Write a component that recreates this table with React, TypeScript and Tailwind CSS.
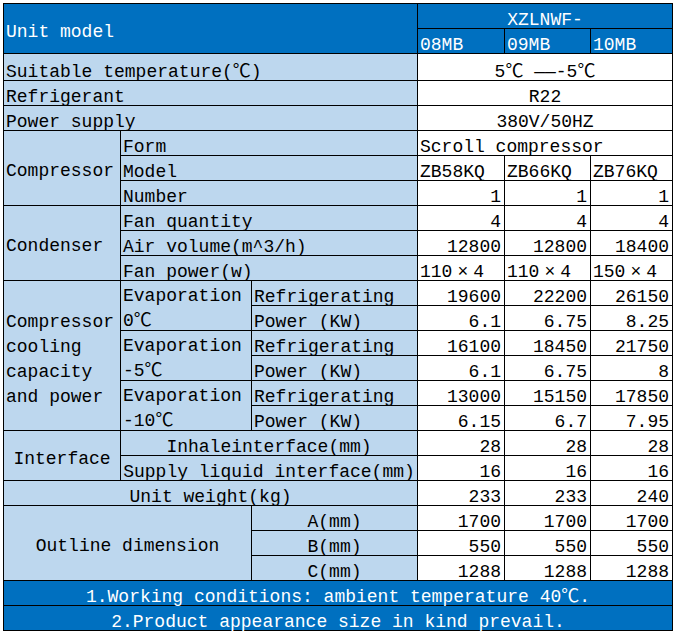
import React from "react";

type P = { c: string; children?: React.ReactNode };
const Cell = ({ c, children }: P) => (
  <div className={`flex whitespace-nowrap overflow-visible ${c}`}>{children}</div>
);

const D = "bg-[#0070c0] text-white";
const L = "bg-[#bdd7ee] text-black";
const W = "bg-white text-black";
const BL = "items-end justify-start pl-[2px] leading-[16px]";
const BR = "items-end justify-end pr-[3px] leading-[16px]";
const BC = "items-end justify-center leading-[16px]";
const ML = "items-center justify-start pl-[2px] pt-[6px] leading-[20px]";
const MC = "items-center justify-center pt-[6px] leading-[20px]";

const X = () => <span className="mx-[5px]">×</span>;

export default function App() {
  return (
    <div className="w-[674px] h-[633px] bg-white">
      <div
        className="ml-[3px] mt-[3px] inline-grid bg-black p-px gap-px grid-cols-[116px_130px_165px_86px_85px_81px] grid-rows-[24px_24px_26px_repeat(22,24px)] text-[18px] font-['Liberation_Mono','Noto_Sans_CJK_SC',monospace]"
      >
        {/* header */}
        <Cell c={`${D} ${ML} col-start-1 col-span-3 row-start-1 row-span-2`}>Unit model</Cell>
        <Cell c={`${D} ${BC} col-start-4 col-span-3 row-start-1`}>XZLNWF-</Cell>
        <Cell c={`${D} ${BL} col-start-4 row-start-2`}>08MB</Cell>
        <Cell c={`${D} ${BL} col-start-5 row-start-2`}>09MB</Cell>
        <Cell c={`${D} ${BL} col-start-6 row-start-2`}>10MB</Cell>

        <Cell c={`${L} ${BL} col-start-1 col-span-3 row-start-3`}>Suitable temperature(℃)</Cell>
        <Cell c={`${W} ${BC} col-start-4 col-span-3 row-start-3`}>
          <span className="whitespace-pre">5℃ ——-5℃</span>
        </Cell>
        <Cell c={`${L} ${BL} col-start-1 col-span-3 row-start-4`}>Refrigerant</Cell>
        <Cell c={`${W} ${BC} col-start-4 col-span-3 row-start-4`}>R22</Cell>
        <Cell c={`${L} ${BL} col-start-1 col-span-3 row-start-5`}>Power supply</Cell>
        <Cell c={`${W} ${BC} col-start-4 col-span-3 row-start-5`}>380V/50HZ</Cell>

        {/* compressor */}
        <Cell c={`${L} ${ML} col-start-1 row-start-6 row-span-3`}>Compressor</Cell>
        <Cell c={`${L} ${BL} col-start-2 col-span-2 row-start-6`}>Form</Cell>
        <Cell c={`${W} ${BL} col-start-4 col-span-3 row-start-6`}>Scroll compressor</Cell>
        <Cell c={`${L} ${BL} col-start-2 col-span-2 row-start-7`}>Model</Cell>
        <Cell c={`${W} ${BL} col-start-4 row-start-7`}>ZB58KQ</Cell>
        <Cell c={`${W} ${BL} col-start-5 row-start-7`}>ZB66KQ</Cell>
        <Cell c={`${W} ${BL} col-start-6 row-start-7`}>ZB76KQ</Cell>
        <Cell c={`${L} ${BL} col-start-2 col-span-2 row-start-8`}>Number</Cell>
        <Cell c={`${W} ${BR} col-start-4 row-start-8`}>1</Cell>
        <Cell c={`${W} ${BR} col-start-5 row-start-8`}>1</Cell>
        <Cell c={`${W} ${BR} col-start-6 row-start-8`}>1</Cell>

        {/* condenser */}
        <Cell c={`${L} ${ML} col-start-1 row-start-9 row-span-3`}>Condenser</Cell>
        <Cell c={`${L} ${BL} col-start-2 col-span-2 row-start-9`}>Fan quantity</Cell>
        <Cell c={`${W} ${BR} col-start-4 row-start-9`}>4</Cell>
        <Cell c={`${W} ${BR} col-start-5 row-start-9`}>4</Cell>
        <Cell c={`${W} ${BR} col-start-6 row-start-9`}>4</Cell>
        <Cell c={`${L} ${BL} col-start-2 col-span-2 row-start-10`}>Air volume(m^3/h)</Cell>
        <Cell c={`${W} ${BR} col-start-4 row-start-10`}>12800</Cell>
        <Cell c={`${W} ${BR} col-start-5 row-start-10`}>12800</Cell>
        <Cell c={`${W} ${BR} col-start-6 row-start-10`}>18400</Cell>
        <Cell c={`${L} ${BL} col-start-2 col-span-2 row-start-11`}>Fan power(w)</Cell>
        <Cell c={`${W} ${BL} col-start-4 row-start-11`}>110<X />4</Cell>
        <Cell c={`${W} ${BL} col-start-5 row-start-11`}>110<X />4</Cell>
        <Cell c={`${W} ${BL} col-start-6 row-start-11`}>150<X />4</Cell>

        {/* cooling capacity */}
        <div className={`${L} col-start-1 row-start-12 row-span-6 flex flex-col justify-center pl-[2px] pt-[8px] leading-[25px] whitespace-nowrap`}>
          <span>Compressor</span>
          <span>cooling</span>
          <span>capacity</span>
          <span>and power</span>
        </div>

        <div className={`${L} col-start-2 row-start-12 row-span-2 flex flex-col pl-[2px] pt-[3px] leading-[25px] whitespace-nowrap`}>
          <span>Evaporation</span>
          <span>0℃</span>
        </div>
        <Cell c={`${L} ${BL} col-start-3 row-start-12`}>Refrigerating</Cell>
        <Cell c={`${W} ${BR} col-start-4 row-start-12`}>19600</Cell>
        <Cell c={`${W} ${BR} col-start-5 row-start-12`}>22200</Cell>
        <Cell c={`${W} ${BR} col-start-6 row-start-12`}>26150</Cell>
        <Cell c={`${L} ${BL} col-start-3 row-start-13`}>Power (KW)</Cell>
        <Cell c={`${W} ${BR} col-start-4 row-start-13`}>6.1</Cell>
        <Cell c={`${W} ${BR} col-start-5 row-start-13`}>6.75</Cell>
        <Cell c={`${W} ${BR} col-start-6 row-start-13`}>8.25</Cell>

        <div className={`${L} col-start-2 row-start-14 row-span-2 flex flex-col pl-[2px] pt-[3px] leading-[25px] whitespace-nowrap`}>
          <span>Evaporation</span>
          <span>-5℃</span>
        </div>
        <Cell c={`${L} ${BL} col-start-3 row-start-14`}>Refrigerating</Cell>
        <Cell c={`${W} ${BR} col-start-4 row-start-14`}>16100</Cell>
        <Cell c={`${W} ${BR} col-start-5 row-start-14`}>18450</Cell>
        <Cell c={`${W} ${BR} col-start-6 row-start-14`}>21750</Cell>
        <Cell c={`${L} ${BL} col-start-3 row-start-15`}>Power (KW)</Cell>
        <Cell c={`${W} ${BR} col-start-4 row-start-15`}>6.1</Cell>
        <Cell c={`${W} ${BR} col-start-5 row-start-15`}>6.75</Cell>
        <Cell c={`${W} ${BR} col-start-6 row-start-15`}>8</Cell>

        <div className={`${L} col-start-2 row-start-16 row-span-2 flex flex-col pl-[2px] pt-[3px] leading-[25px] whitespace-nowrap`}>
          <span>Evaporation</span>
          <span>-10℃</span>
        </div>
        <Cell c={`${L} ${BL} col-start-3 row-start-16`}>Refrigerating</Cell>
        <Cell c={`${W} ${BR} col-start-4 row-start-16`}>13000</Cell>
        <Cell c={`${W} ${BR} col-start-5 row-start-16`}>15150</Cell>
        <Cell c={`${W} ${BR} col-start-6 row-start-16`}>17850</Cell>
        <Cell c={`${L} ${BL} col-start-3 row-start-17`}>Power (KW)</Cell>
        <Cell c={`${W} ${BR} col-start-4 row-start-17`}>6.15</Cell>
        <Cell c={`${W} ${BR} col-start-5 row-start-17`}>6.7</Cell>
        <Cell c={`${W} ${BR} col-start-6 row-start-17`}>7.95</Cell>

        {/* interface */}
        <Cell c={`${L} ${MC} col-start-1 row-start-18 row-span-2`}>Interface</Cell>
        <Cell c={`${L} ${BC} col-start-2 col-span-2 row-start-18`}>Inhaleinterface(mm)</Cell>
        <Cell c={`${W} ${BR} col-start-4 row-start-18`}>28</Cell>
        <Cell c={`${W} ${BR} col-start-5 row-start-18`}>28</Cell>
        <Cell c={`${W} ${BR} col-start-6 row-start-18`}>28</Cell>
        <Cell c={`${L} ${BC} col-start-2 col-span-2 row-start-19`}>Supply liquid interface(mm)</Cell>
        <Cell c={`${W} ${BR} col-start-4 row-start-19`}>16</Cell>
        <Cell c={`${W} ${BR} col-start-5 row-start-19`}>16</Cell>
        <Cell c={`${W} ${BR} col-start-6 row-start-19`}>16</Cell>

        <Cell c={`${L} ${BC} col-start-1 col-span-3 row-start-20`}>Unit weight(kg)</Cell>
        <Cell c={`${W} ${BR} col-start-4 row-start-20`}>233</Cell>
        <Cell c={`${W} ${BR} col-start-5 row-start-20`}>233</Cell>
        <Cell c={`${W} ${BR} col-start-6 row-start-20`}>240</Cell>

        {/* outline */}
        <Cell c={`${L} ${MC} col-start-1 col-span-2 row-start-21 row-span-3`}>Outline dimension</Cell>
        <Cell c={`${L} ${BC} col-start-3 row-start-21`}>A(mm)</Cell>
        <Cell c={`${W} ${BR} col-start-4 row-start-21`}>1700</Cell>
        <Cell c={`${W} ${BR} col-start-5 row-start-21`}>1700</Cell>
        <Cell c={`${W} ${BR} col-start-6 row-start-21`}>1700</Cell>
        <Cell c={`${L} ${BC} col-start-3 row-start-22`}>B(mm)</Cell>
        <Cell c={`${W} ${BR} col-start-4 row-start-22`}>550</Cell>
        <Cell c={`${W} ${BR} col-start-5 row-start-22`}>550</Cell>
        <Cell c={`${W} ${BR} col-start-6 row-start-22`}>550</Cell>
        <Cell c={`${L} ${BC} col-start-3 row-start-23`}>C(mm)</Cell>
        <Cell c={`${W} ${BR} col-start-4 row-start-23`}>1288</Cell>
        <Cell c={`${W} ${BR} col-start-5 row-start-23`}>1288</Cell>
        <Cell c={`${W} ${BR} col-start-6 row-start-23`}>1288</Cell>

        {/* notes */}
        <Cell c={`${D} ${BC} col-start-1 col-span-6 row-start-24`}>1.Working conditions: ambient temperature 40℃.</Cell>
        <Cell c={`${D} ${BC} col-start-1 col-span-6 row-start-25`}>2.Product appearance size in kind prevail.</Cell>
      </div>
    </div>
  );
}
